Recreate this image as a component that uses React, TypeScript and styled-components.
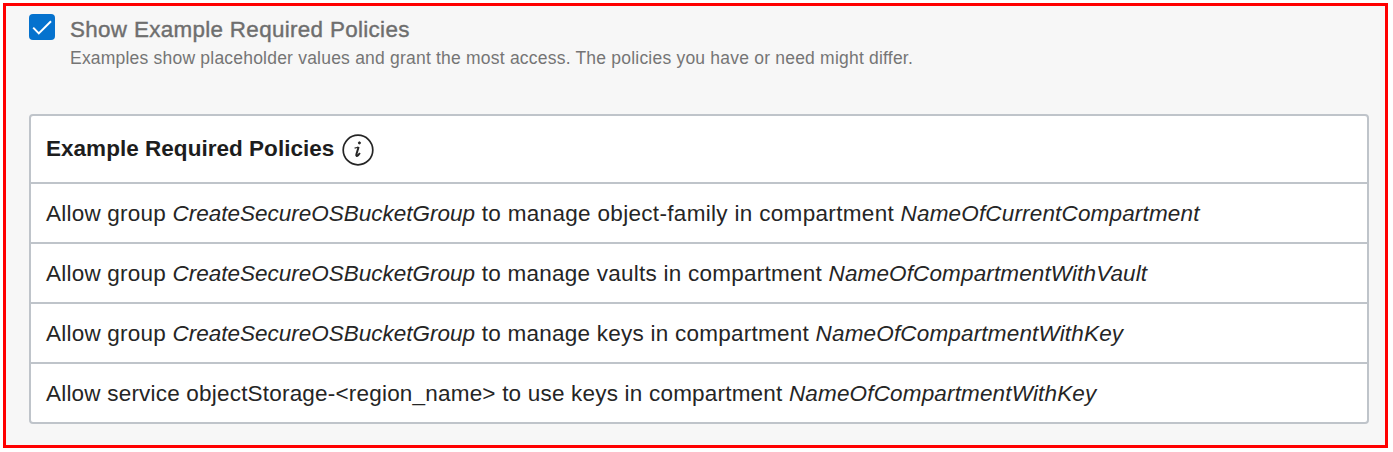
import React from "react";
import styled, { createGlobalStyle } from "styled-components";

const GlobalStyle = createGlobalStyle`
  * { box-sizing: border-box; }
  body {
    margin: 0;
    background: #fff;
    font-family: "Liberation Sans", Arial, sans-serif;
  }
`;

const Page = styled.div`
  height: 452px;
  padding: 3px 5px 4px 3px;
`;

const Frame = styled.main`
  height: 445px;
  border: 3px solid #ff0000;
  background: #f7f7f7;
  padding: 8px 16px 0 23px;
`;

const Option = styled.label`
  display: flex;
  align-items: flex-start;
  gap: 15px;
  height: 100px;
`;

const Checkbox = styled.span`
  display: flex;
  width: 26px;
  height: 26px;
  border-radius: 4px;
  background: #0572ce;
`;

const OptionText = styled.span`
  display: flex;
  flex-direction: column;
  padding-top: 1px;
`;

const OptionTitle = styled.span`
  font-size: 22.4px;
  line-height: 30px;
  color: #6e6e6e;
  -webkit-text-stroke: 0.4px #6e6e6e;
  letter-spacing: 0.33px;
  white-space: nowrap;
`;

const OptionHint = styled.span`
  font-size: 17.5px;
  line-height: 27px;
  color: #757575;
  letter-spacing: 0.21px;
  white-space: nowrap;
`;

const Panel = styled.section`
  border: 2px solid #bfc4ca;
  border-radius: 4px;
  background: #fff;
  height: 310px;
`;

const Header = styled.header`
  display: flex;
  align-items: center;
  gap: 8px;
  height: 66px;
  padding: 1px 0 0 15px;
`;

const Heading = styled.h2`
  margin: 0 0 2px;
  font-size: 22.5px;
  line-height: 28px;
  font-weight: 700;
  color: #1d1d1d;
  letter-spacing: 0.03px;
  white-space: nowrap;
`;

const Row = styled.div`
  height: 60px;
  padding: 1px 0 0 15px;
  border-top: 2px solid #bfc4ca;
  font-size: 22.5px;
  line-height: 58px;
  color: #252525;
  white-space: nowrap;
`;

const Run = styled.span<{ $track?: number }>`
  letter-spacing: ${(p) => p.$track ?? 0}px;
`;

const Name = styled(Run)`
  font-style: italic;
`;

const policies = [
  { lead: "Allow group ", leadTrack: 0.22, group: "CreateSecureOSBucketGroup", action: " to manage object-family in compartment ", actionTrack: 0.32, target: "NameOfCurrentCompartment", targetTrack: 0.16 },
  { lead: "Allow group ", leadTrack: 0.22, group: "CreateSecureOSBucketGroup", action: " to manage vaults in compartment ", actionTrack: 0.25, target: "NameOfCompartmentWithVault", targetTrack: 0.13 },
  { lead: "Allow group ", leadTrack: 0.22, group: "CreateSecureOSBucketGroup", action: " to manage keys in compartment ", actionTrack: 0.25, target: "NameOfCompartmentWithKey", targetTrack: 0.17 },
  { lead: "Allow service objectStorage-<region_name> to use keys in compartment ", leadTrack: 0.2, group: "", action: "", actionTrack: 0, target: "NameOfCompartmentWithKey", targetTrack: 0.16 },
];

function CheckMark() {
  return (
    <svg width="26" height="26" viewBox="0 0 26 26" fill="none">
      <path d="M4.2 13.6 9.8 19.4 22 7.2" stroke="#fff" strokeWidth="2" />
    </svg>
  );
}

function InfoIcon() {
  return (
    <svg width="32" height="32" viewBox="0 0 32 32" fill="none" stroke="#252525">
      <circle cx="16" cy="16" r="14.8" strokeWidth="1.7" />
      <path d="M12.6 14.2c1.3-.3 2.7-.8 3.8-1.2" strokeWidth="1.3" />
      <path d="M16.6 13l-2.2 7.2c-.5 1.9.5 2.2 1.7 1.1l1.8-2.3" strokeWidth="2" />
      <circle cx="17.4" cy="8.9" r="1.1" fill="#252525" strokeWidth="0.8" />
    </svg>
  );
}

export default function App() {
  return (
    <>
      <GlobalStyle />
      <Page>
        <Frame>
          <Option>
            <Checkbox><CheckMark /></Checkbox>
            <OptionText>
              <OptionTitle>Show Example Required Policies</OptionTitle>
              <OptionHint>
                Examples show placeholder values and grant the most access. The policies you have or need might differ.
              </OptionHint>
            </OptionText>
          </Option>
          <Panel>
            <Header>
              <Heading>Example Required Policies</Heading>
              <InfoIcon />
            </Header>
            {policies.map((p, i) => (
              <Row key={i}>
                <Run $track={p.leadTrack}>{p.lead}</Run>
                {p.group && <Name>{p.group}</Name>}
                {p.action && <Run $track={p.actionTrack}>{p.action}</Run>}
                <Name $track={p.targetTrack}>{p.target}</Name>
              </Row>
            ))}
          </Panel>
        </Frame>
      </Page>
    </>
  );
}
